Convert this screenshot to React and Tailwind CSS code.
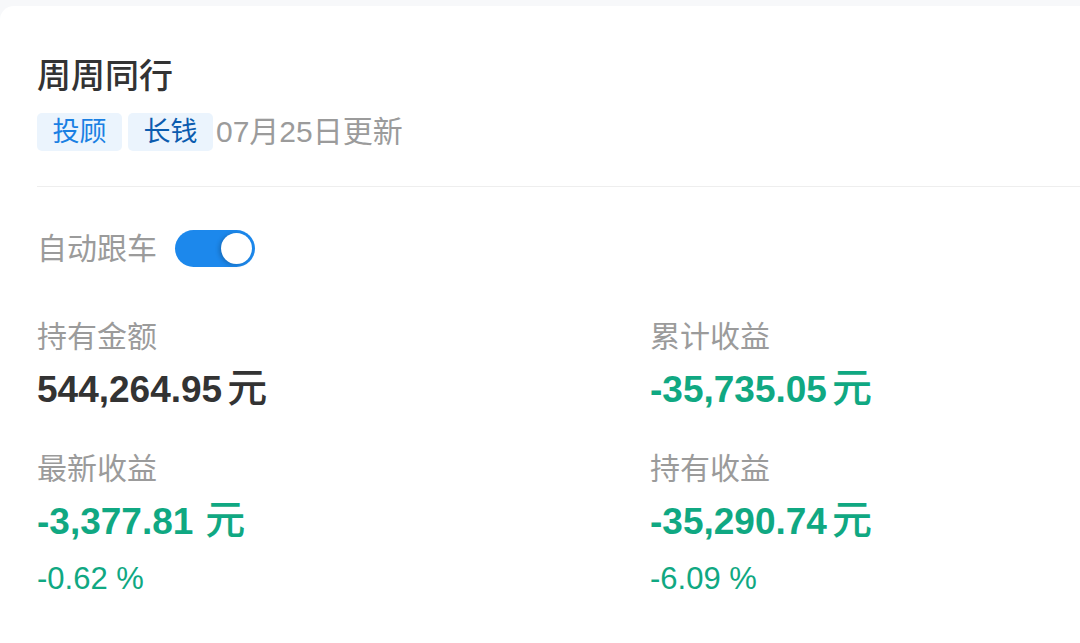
import React, { useState } from 'react'

const cjk = "font-['Liberation_Sans','Noto_Sans_CJK_SC',sans-serif]"

const Stat = ({ label, value, unit, spaced, percent, dark }) => (
  <div>
    <div className="text-[30px] leading-[40px] text-[#9b9b9b]">{label}</div>
    <div
      className={`mt-[11px] h-[44px] text-[37px] leading-[44px] font-bold ${dark ? 'text-[#333333]' : 'text-[#10a882]'}`}
    >
      {value}
      <span className={`${spaced ? 'ml-[12px]' : 'ml-[5px]'} font-medium text-[40px] leading-none`}>{unit}</span>
    </div>
    {percent && (
      <div className="mt-[17px] text-[31px] leading-[36px] text-[#10a882]">{percent}</div>
    )}
  </div>
)

const App = () => {
  const [autoFollow, setAutoFollow] = useState(true)

  return (
    <div className={`min-h-[643px] bg-[#f7f8fa] pt-[6px] overflow-hidden ${cjk}`}>
      <div className="w-[1100px] min-h-[637px] bg-white rounded-tl-[14px] pl-[37px] pt-[48px]">
        {/* Header */}
        <h1 className="text-[34px] leading-[44px] font-medium text-[#333333]">周周同行</h1>
        <div className="mt-[15px] flex items-center h-[38px]">
          <span className="h-[38px] w-[85px] flex items-center justify-center rounded-[5px] bg-[#ebf4fd] text-[27px] text-[#1a80e3]">
            投顾
          </span>
          <span className="ml-[6px] h-[38px] w-[85px] flex items-center justify-center rounded-[5px] bg-[#ebf4fd] text-[27px] text-[#0b5caf]">
            长钱
          </span>
          <span className="ml-[3px] text-[30px] leading-[38px] text-[#9b9b9b]">07月25日更新</span>
        </div>

        <div className="mt-[35px] h-px bg-[#eeeeee]"></div>

        {/* Auto follow toggle */}
        <div className="mt-[43px] flex items-center h-[37px]">
          <span className="text-[30px] leading-[40px] text-[#9b9b9b]">自动跟车</span>
          <button
            type="button"
            onClick={() => setAutoFollow(!autoFollow)}
            className={`ml-[18px] w-[80px] h-[37px] rounded-full p-[3px] flex items-center ${autoFollow ? 'bg-[#1c88ec] justify-end' : 'bg-[#dddddd] justify-start'}`}
          >
            <span className="block w-[31px] h-[31px] rounded-full bg-white shadow-[-2px_1px_4px_rgba(0,0,0,0.2)]"></span>
          </button>
        </div>

        {/* Stats */}
        <div className="mt-[50px] grid grid-cols-[613px_1fr]">
          <Stat label="持有金额" value="544,264.95" unit="元" dark />
          <Stat label="累计收益" value="-35,735.05" unit="元" />
          <div className="mt-[37px]">
            <Stat label="最新收益" value="-3,377.81" unit="元" spaced percent="-0.62 %" />
          </div>
          <div className="mt-[37px]">
            <Stat label="持有收益" value="-35,290.74" unit="元" percent="-6.09 %" />
          </div>
        </div>
      </div>
    </div>
  )
}

export default App
